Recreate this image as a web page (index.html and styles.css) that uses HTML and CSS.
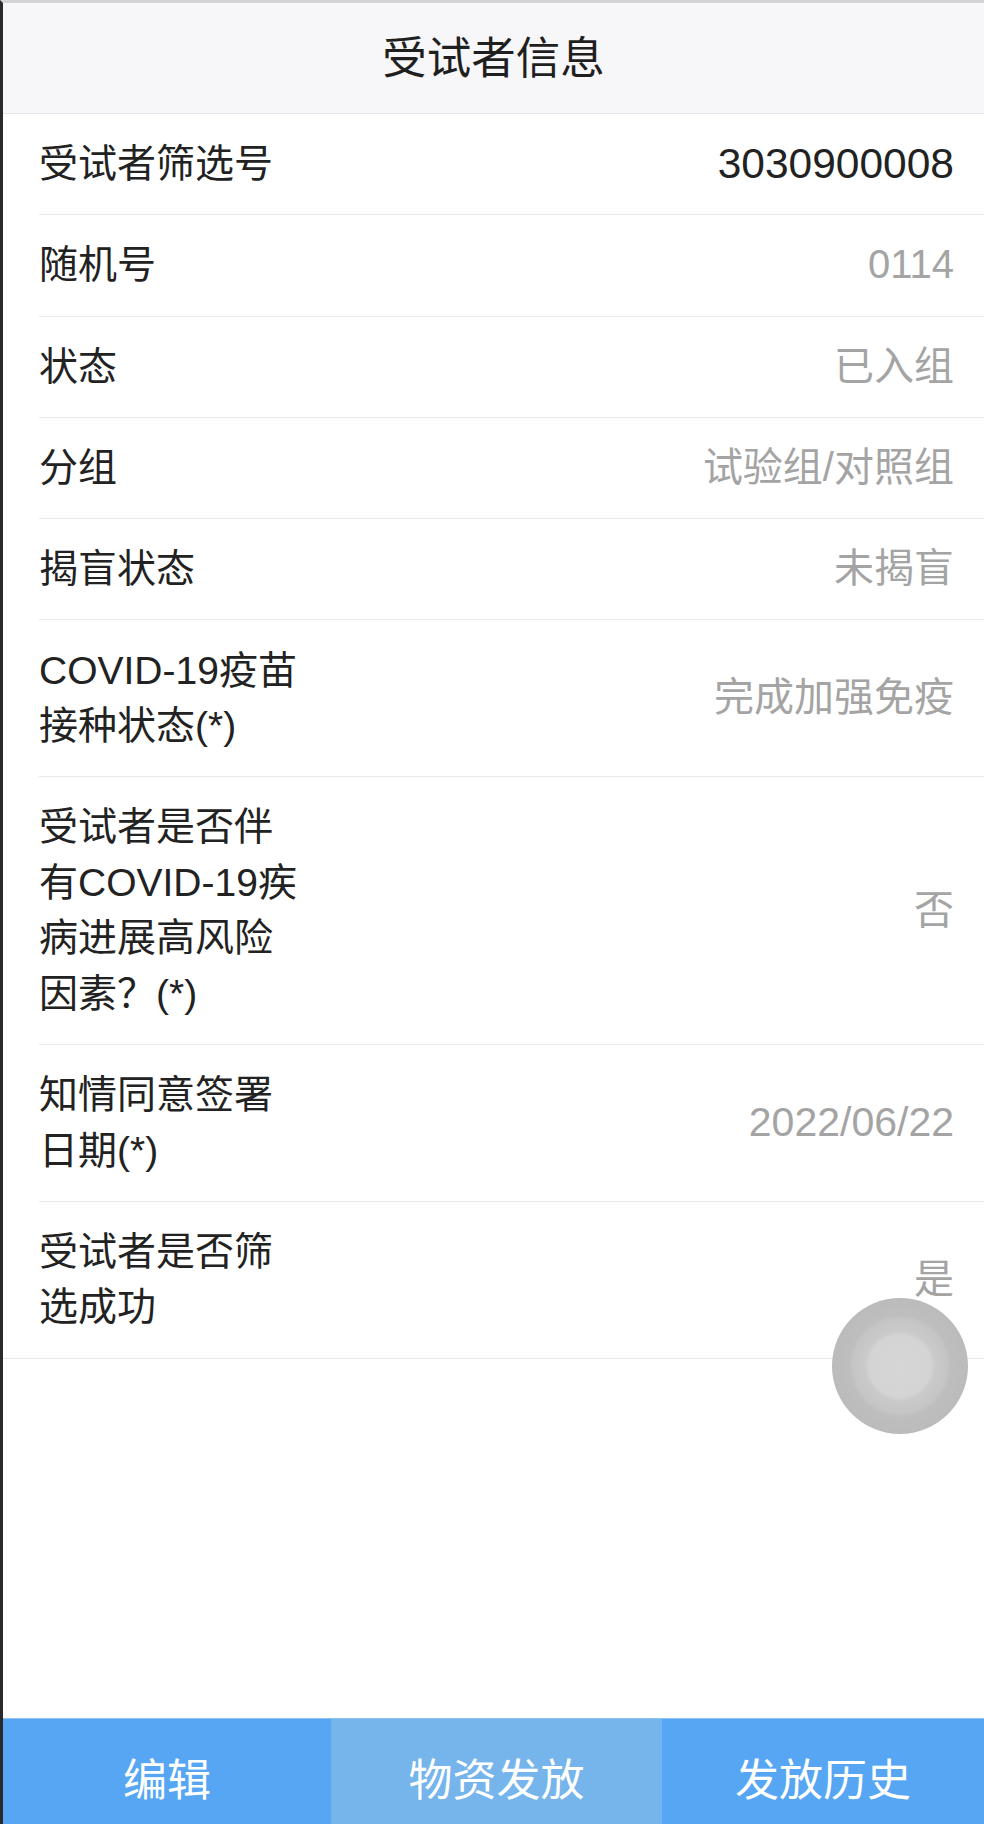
FILE: index.html
```html
<!DOCTYPE html>
<html lang="zh-CN">
<head>
<meta charset="utf-8">
<title>受试者信息</title>
<link rel="stylesheet" href="styles.css">
</head>
<body>
<div class="page">
  <header class="topbar">
    <h1 class="title">受试者信息</h1>
  </header>
  <main class="list">
    <div class="row">
      <div class="label">受试者筛选号</div>
      <div class="value dark">3030900008</div>
    </div>
    <div class="row">
      <div class="label">随机号</div>
      <div class="value">0114</div>
    </div>
    <div class="row">
      <div class="label">状态</div>
      <div class="value">已入组</div>
    </div>
    <div class="row">
      <div class="label">分组</div>
      <div class="value">试验组/对照组</div>
    </div>
    <div class="row">
      <div class="label">揭盲状态</div>
      <div class="value">未揭盲</div>
    </div>
    <div class="row">
      <div class="label">COVID-19疫苗接种状态(*)</div>
      <div class="value">完成加强免疫</div>
    </div>
    <div class="row">
      <div class="label">受试者是否伴有COVID-19疾病进展高风险因素？(*)</div>
      <div class="value">否</div>
    </div>
    <div class="row">
      <div class="label">知情同意签署日期(*)</div>
      <div class="value date">2022/06/22</div>
    </div>
    <div class="row last">
      <div class="label">受试者是否筛选成功</div>
      <div class="value">是</div>
    </div>
  </main>
  <nav class="tabbar">
    <div class="tab">编辑</div>
    <div class="tab active">物资发放</div>
    <div class="tab">发放历史</div>
  </nav>
  <div class="float-btn"></div>
</div>
</body>
</html>
```

FILE: styles.css
```css
* { box-sizing: border-box; }
html, body {
  margin: 0;
  padding: 0;
  background: #ffffff;
}
body {
  font-family: "Liberation Sans", "Noto Sans CJK SC", sans-serif;
  color: #222222;
}
.page {
  position: relative;
  min-height: 1824px;
  display: flex;
  flex-direction: column;
  border-left: 3px solid #2a2a2a;
  border-top: 3px solid #d4d4d6;
  background: #ffffff;
}
.topbar {
  height: 111px;
  background: #f7f7f9;
  border-bottom: 1px solid #e4e4ea;
  display: flex;
  align-items: center;
  justify-content: center;
}
.title {
  margin: 0;
  padding-top: 2px;
  font-size: 44.5px;
  font-weight: normal;
  color: #1f1f1f;
  line-height: 1;
}
.list {
  display: flex;
  flex-direction: column;
}
.row {
  display: flex;
  align-items: center;
  margin-left: 36px;
  padding: 22.2px 30px 22.6px 0;
  border-bottom: 1px solid #e9e9ec;
  font-size: 39px;
  line-height: 55.5px;
}
.row.last {
  margin-left: 0;
  padding-left: 36px;
}
.label {
  flex: none;
  width: 270px;
  color: #222222;
}
.value {
  flex: 1;
  text-align: right;
  color: #a4a4a4;
  font-size: 40px;
}
.value.date {
  font-size: 41px;
}
.value.dark {
  color: #222222;
  font-size: 42.5px;
}
.tabbar {
  margin-top: auto;
  height: 106px;
  display: grid;
  grid-template-columns: 328px 331px 1fr;
  background: #56a6f3;
  border-top: 1px solid #8cc3f4;
}
.tab {
  color: #ffffff;
  font-size: 44px;
  line-height: 44px;
  text-align: center;
  padding-top: 40px;
}
.tab.active {
  background: #76b4ec;
}
.float-btn {
  position: absolute;
  left: 829px;
  top: 1295px;
  width: 136px;
  height: 136px;
  border-radius: 50%;
  background: radial-gradient(circle, #d6d6d6 0, #d4d4d4 31px, #cacaca 35px, #c5c5c5 47px, #bebebe 51px, #bbbbbb 68px);
}
```
